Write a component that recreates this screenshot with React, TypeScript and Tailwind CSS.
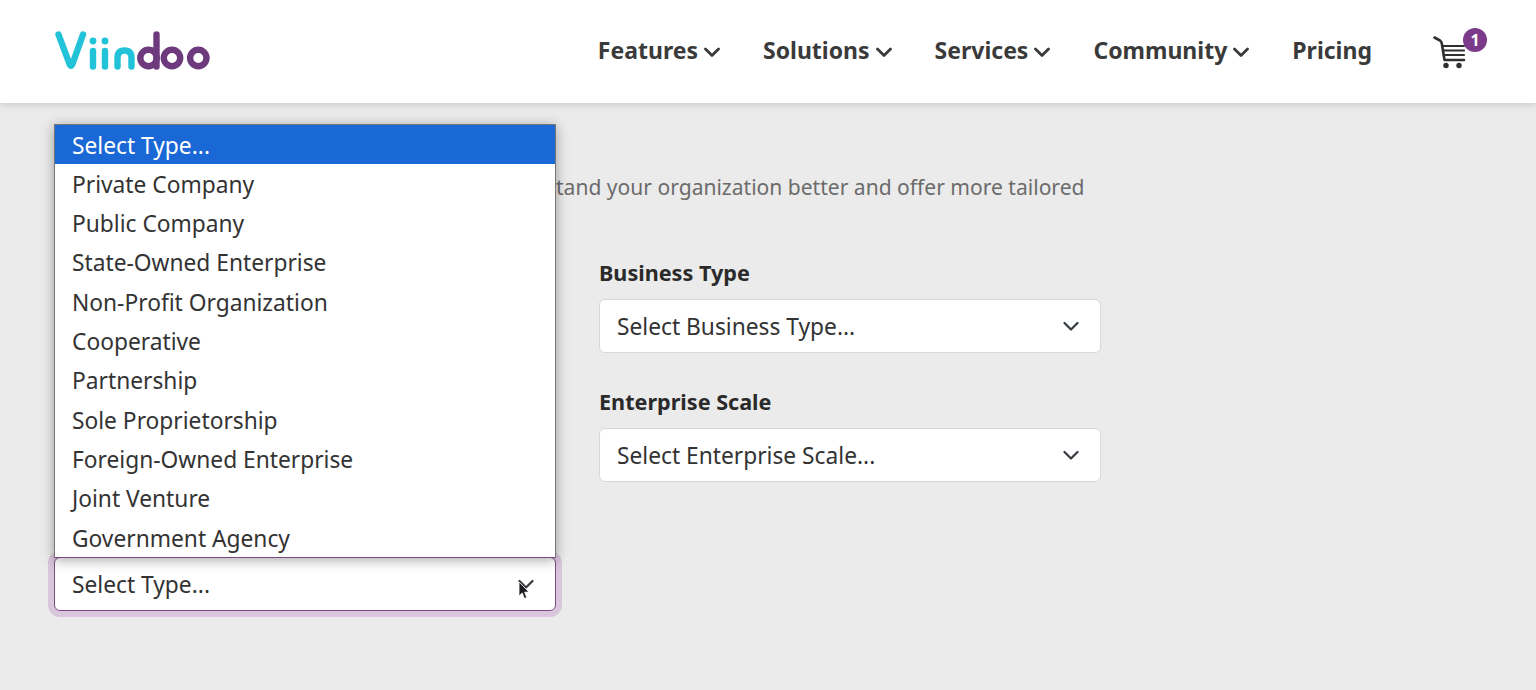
import React from "react";

const options = ["Private Company","Public Company","State-Owned Enterprise","Non-Profit Organization","Cooperative","Partnership","Sole Proprietorship","Foreign-Owned Enterprise","Joint Venture","Government Agency"];

function Chevron({ className = "", sw = 2.2 }: { className?: string; sw?: number }) {
  return (
    <svg width="16" height="11" viewBox="0 0 16 11" fill="none" className={className}>
      <path d="M1.5 2 L8 8.5 L14.5 2" stroke="currentColor" strokeWidth={sw} strokeLinecap="round" strokeLinejoin="round" />
    </svg>
  );
}

function Logo() {
  const teal = "#22c3d8";
  const purple = "#6e3a7e";
  return (
    <svg width="162" height="44" viewBox="0 0 162 44" fill="none" role="img" aria-label="Viindoo" strokeLinecap="round" strokeLinejoin="round" strokeWidth="6.4" className="mt-[3px]">
      <path d="M4.5 3.5 L15.5 33 Q17 36.5 18.5 33 L29 3.5" stroke={teal} />
      <path d="M39 20 V35.5 M51 20 V35.5" stroke={teal} />
      <circle cx="39" cy="10" r="3.4" fill={teal} stroke="none" />
      <circle cx="51" cy="10" r="3.4" fill={teal} stroke="none" />
      <path d="M63.5 35.5 V27 Q63.5 19.5 70.5 19.5 Q77.5 19.5 77.5 27 V35.5" stroke={teal} />
      <circle cx="94.5" cy="27" r="8.2" stroke={purple} />
      <path d="M102.5 3.5 V35.5" stroke={purple} />
      <circle cx="118" cy="27" r="8.2" stroke={purple} />
      <circle cx="144.3" cy="27" r="8.2" stroke={purple} />
    </svg>
  );
}

function Cart() {
  return (
    <div className="relative w-[54px] h-[46px]">
      <svg width="36" height="38" viewBox="0 0 36 38" fill="none" className="absolute left-0 top-[8px]" stroke="#2f2f2f" strokeWidth="2.6" strokeLinecap="round" strokeLinejoin="round">
        <path d="M1.5 1.5 L7 4.5 Q8.5 5.5 8.8 7.5 L11.5 24 H31" />
        <path d="M10 10 H31 M11 14.5 H31 M11 19 H31" strokeWidth="2.2" />
        <circle cx="13" cy="29.5" r="2.7" fill="#2f2f2f" stroke="none" />
        <circle cx="26" cy="29.5" r="2.7" fill="#2f2f2f" stroke="none" />
      </svg>
      <span className="absolute right-0 top-0 w-[24px] h-[24px] rounded-full bg-[#7c3a8a] text-white text-[16px] font-bold flex items-center justify-center leading-none">1</span>
    </div>
  );
}

function Field({ label, value }: { label: string; value: string }) {
  return (
    <div className="mb-[33px]">
      <label className="block text-[21.6px] leading-[32px] font-bold text-[#2a2a2a] mb-[10px]">{label}</label>
      <div className="h-[54px] bg-white border border-[#d6d6de] rounded-[6px] flex items-center justify-between pl-[17px] pr-[21px] text-[22.75px] text-[#333]">
        <span className="pt-[2px]">{value}</span>
        <Chevron className="text-[#343a40]" />
      </div>
    </div>
  );
}

export default function App() {
  return (
    <div className="relative h-[690px] overflow-hidden bg-[#ebebeb] font-['Noto_Sans','Open_Sans',sans-serif]">
      <header className="relative z-10 h-[103px] bg-white shadow-[0_1px_8px_rgba(0,0,0,0.16)] flex items-center justify-between pl-[54px] pr-[49px]">
        <Logo />
        <nav className="flex items-center text-[23px] font-bold text-[#3a3a3a] mb-[2px]">
          {["Features", "Solutions", "Services", "Community"].map((n) => (
            <span key={n} className="flex items-center gap-[6px] mr-[43px]">
              {n}
              <Chevron className="text-[#3a3a3a] mt-[3px]" sw={2.8} />
            </span>
          ))}
          <span className="mr-[61px]">Pricing</span>
          <Cart />
        </nav>
      </header>

      <main className="px-[54px]">
        <p className="mt-[68px] ml-[502px] text-[21.05px] leading-[32px] text-[#6b6b6b] whitespace-nowrap">tand your organization better and offer more tailored</p>
        <div className="mt-[54px] grid grid-cols-[502px_502px] gap-x-[43px]">
          <div className="flex flex-col pt-[300px]">
            <div className="h-[54px] bg-white border border-[#7c4a85] rounded-[6px] shadow-[0_0_0_6px_#d9c5dc] flex items-center justify-between pl-[17px] pr-[21px] text-[22.75px] text-[#333]">
              <span className="pt-[2px]">Select Type...</span>
              <span className="relative w-[16px] h-[11px] block">
                <Chevron className="text-[#343a40]" />
                <svg width="12" height="20" viewBox="0 0 12 20" className="absolute left-[0px] top-[2px]">
                  <path d="M1 1 V15 L4.2 12 L6.4 17.5 L8.8 16.5 L6.6 11.2 L11 11 Z" fill="#1c1c1c" stroke="#ffffff" strokeWidth="0.8" />
                </svg>
              </span>
            </div>
          </div>
          <div>
            <Field label="Business Type" value="Select Business Type..." />
            <Field label="Enterprise Scale" value="Select Enterprise Scale..." />
          </div>
        </div>
      </main>

      <ul className="absolute z-20 left-[54px] top-[124px] w-[502px] bg-white border border-[#767676] border-b-[#7c4a85] shadow-[0_2px_12px_rgba(0,0,0,0.35)] text-[22.75px] text-[#333]">
        <li className="h-[39.3px] flex items-center pl-[17px] pt-[2px] bg-[#1a67d6] text-white">Select Type...</li>
        {options.map((o) => (
          <li key={o} className="h-[39.3px] flex items-center pl-[17px] pt-[2px]">{o}</li>
        ))}
      </ul>
    </div>
  );
}
